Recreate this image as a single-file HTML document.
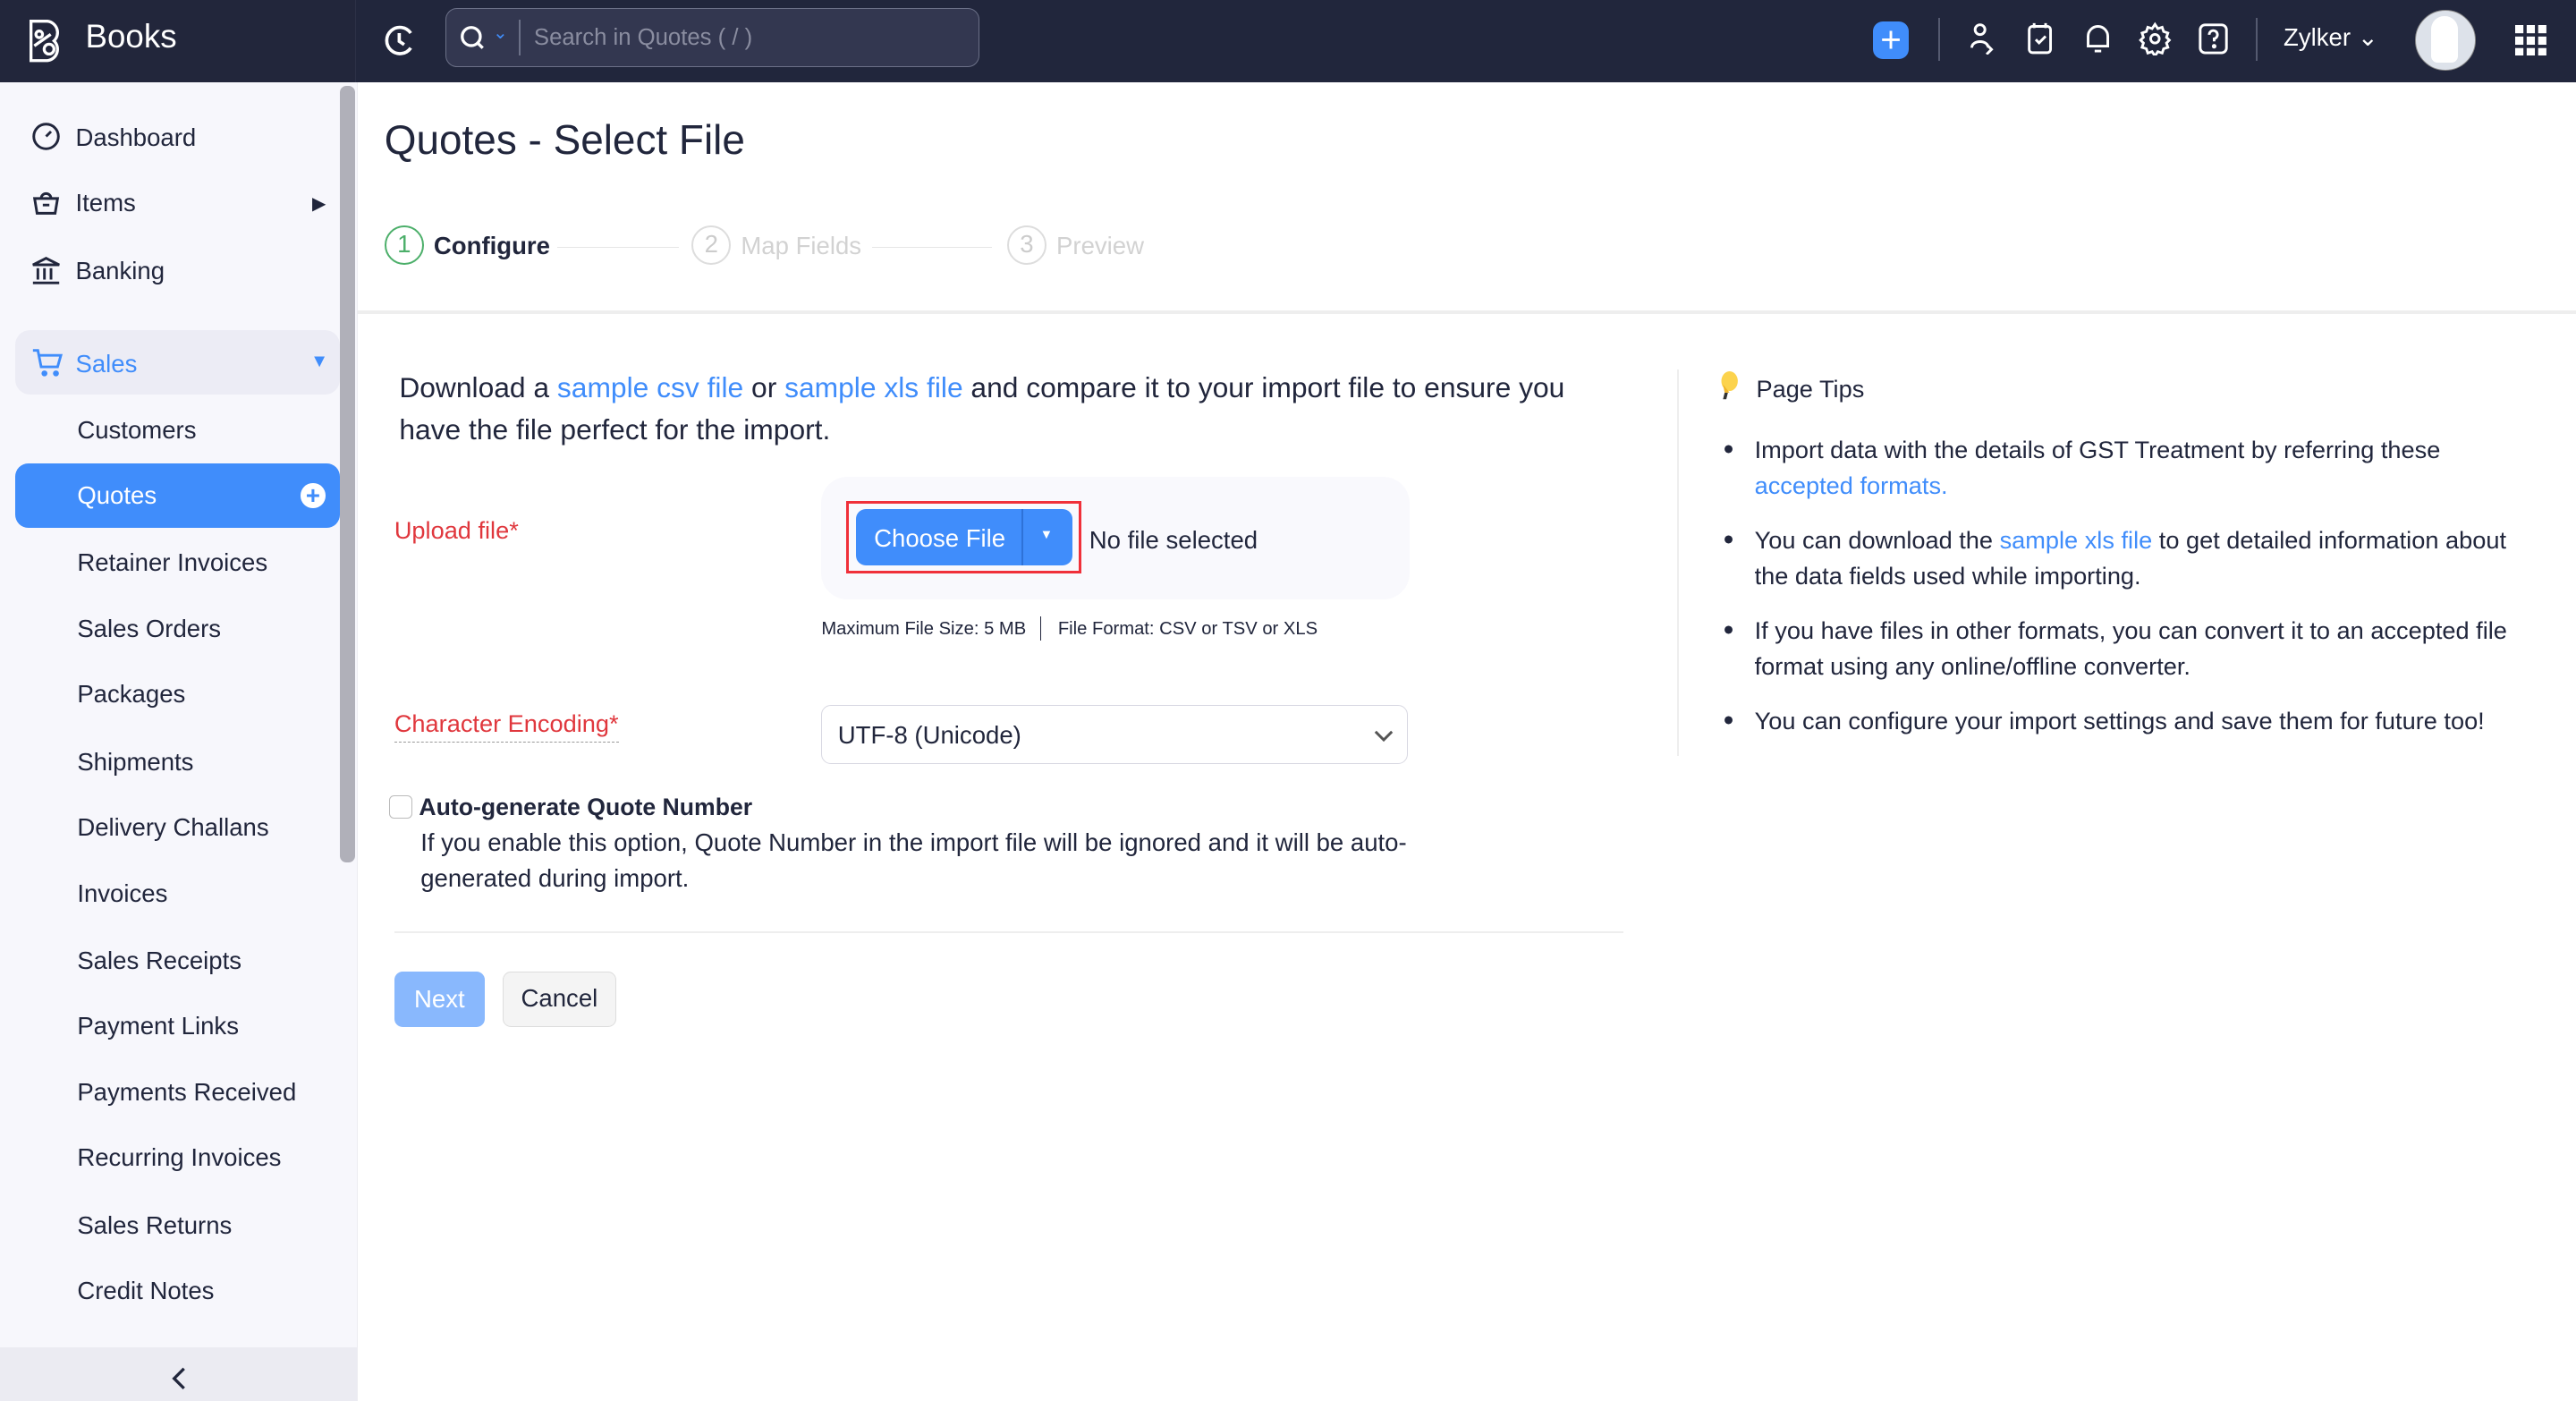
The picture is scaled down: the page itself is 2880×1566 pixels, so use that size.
<!DOCTYPE html>
<html><head><meta charset="utf-8"><style>
html,body{margin:0;padding:0;width:2880px;height:1566px;overflow:hidden;background:#fff}
#w{zoom:1.83673;width:1568px;height:853px;position:relative;font-family:"Liberation Sans",sans-serif;color:#21263c}
.a{position:absolute;white-space:nowrap}
.hdr{position:absolute;left:0;top:0;width:1568px;height:50px;background:#21263c}
.side{position:absolute;left:0;top:50px;width:217px;height:803px;background:#f7f7fc;border-right:1px solid #ececf1}
.ni{position:absolute;left:47px;font-size:15px;color:#21263c}
.blue{color:#408dfb}
svg{position:absolute}
.bl{position:absolute;left:0;font-size:18px}
</style></head><body><div id="w">
<div class="hdr"></div>
<div class="a" style="left:0;top:0;width:216px;height:50px;background:#22263b;border-right:1px solid #2c3147"></div>
<svg style="left:17px;top:11px" width="28" height="28" viewBox="0 0 28 28" fill="none" stroke="#fff" stroke-width="1.8"><path d="M2 2h10a7 7 0 0 1 4 12a7 7 0 0 1 -4 12H2z"/><circle cx="7" cy="10" r="2"/><path d="M4 17l10 -7"/><circle cx="13" cy="19" r="3"/></svg>
<div class="a" style="left:52px;top:11px;font-size:20px;color:#fff">Books</div>
<svg style="left:233px;top:14px" width="21" height="21" viewBox="0 0 21 21" fill="none" stroke="#fff" stroke-width="2"><path d="M17 6A8 8 0 1 0 17 15"/><path d="M10 6v5l3 2"/></svg>
<div class="a" style="left:271px;top:5px;width:324px;height:35px;border:1px solid #6b7087;border-radius:7px;background:#333750"></div>
<svg style="left:280px;top:15px" width="16" height="16" viewBox="0 0 16 16" fill="none" stroke="#fff" stroke-width="1.8"><circle cx="7" cy="7" r="5.5"/><path d="M11 11l3 3"/></svg>
<div class="a" style="left:300px;top:13px;color:#408dfb;font-size:11px">⌄</div>
<div class="a" style="left:316px;top:12px;width:1px;height:22px;background:#6b7087"></div>
<div class="a" style="left:325px;top:15px;font-size:14px;color:#8a8da0">Search in Quotes ( / )</div>
<div class="a" style="left:1140px;top:13px;width:22px;height:23px;background:#408dfb;border-radius:6px;color:#fff;font-size:22px;line-height:22px;text-align:center">+</div>
<div class="a" style="left:1180px;top:11px;width:1px;height:26px;background:#555a70"></div>
<svg style="left:1197px;top:13px" width="20" height="20" viewBox="0 0 20 20" fill="none" stroke="#fff" stroke-width="1.6"><circle cx="8" cy="5" r="3"/><path d="M3 16c0-5 10-5 10 0M12 14l3 3-3 3"/></svg>
<svg style="left:1233px;top:13px" width="18" height="21" viewBox="0 0 18 21" fill="none" stroke="#fff" stroke-width="1.6"><rect x="2" y="3" width="13" height="16" rx="2"/><path d="M5 1v3M12 1v3M6 11l2 2 4-4"/></svg>
<svg style="left:1268px;top:13px" width="18" height="21" viewBox="0 0 18 21" fill="none" stroke="#fff" stroke-width="1.6"><path d="M3 15V9a6 6 0 0 1 12 0v6H3zM7 18h4"/></svg>
<svg style="left:1301px;top:13px" width="21" height="21" viewBox="0 0 24 24" fill="none" stroke="#fff" stroke-width="1.8"><circle cx="12" cy="12" r="3"/><path d="M12 2l2 3 3-1 1 3 3 1-1 3 2 2-2 2 1 3-3 1-1 3-3-1-2 3-2-3-3 1-1-3-3-1 1-3-2-2 2-2-1-3 3-1 1-3 3 1z"/></svg>
<svg style="left:1338px;top:14px" width="18" height="19" viewBox="0 0 18 19" fill="none" stroke="#fff" stroke-width="1.6"><rect x="1" y="1" width="16" height="17" rx="3"/><path d="M6.5 7a2.5 2.5 0 1 1 3 2.4V11"/><circle cx="9.5" cy="14" r=".6" fill="#fff"/></svg>
<div class="a" style="left:1373px;top:11px;width:1px;height:26px;background:#555a70"></div>
<div class="a" style="left:1390px;top:14px;font-size:15px;color:#fff">Zylker ⌄</div>
<div class="a" style="left:1470px;top:6px;width:36px;height:36px;border-radius:50%;background:#dde2ea;border:1px solid #888"></div>
<div class="a" style="left:1480px;top:10px;width:16px;height:28px;background:#fff;border-radius:8px 8px 4px 4px"></div>
<svg style="left:1531px;top:15px" width="19" height="19" viewBox="0 0 19 19" fill="#fff"><rect x="0" y="0" width="5" height="5"/><rect x="7" y="0" width="5" height="5"/><rect x="14" y="0" width="5" height="5"/><rect x="0" y="7" width="5" height="5"/><rect x="7" y="7" width="5" height="5"/><rect x="14" y="7" width="5" height="5"/><rect x="0" y="14" width="5" height="5"/><rect x="7" y="14" width="5" height="5"/><rect x="14" y="14" width="5" height="5"/></svg>

<div class="side"></div>
<div class="a" style="left:207px;top:52px;width:9px;height:473px;background:#b0b0b9;border-radius:4px"></div>
<svg style="left:19px;top:74px" width="18" height="18" viewBox="0 0 18 18" fill="none" stroke="#21263c" stroke-width="1.6"><circle cx="9" cy="9" r="7.5"/><path d="M9 9l3-3"/></svg>
<div class="ni" style="left:46px;top:75px">Dashboard</div>
<svg style="left:19px;top:114px" width="18" height="18" viewBox="0 0 18 18" fill="none" stroke="#21263c" stroke-width="1.6"><path d="M2 7h14l-1.5 9h-11zM6 7a3 3 0 0 1 6 0M7 11h4"/></svg>
<div class="ni" style="left:46px;top:115px">Items</div>
<div class="a" style="left:190px;top:117px;font-size:11px">▶</div>
<svg style="left:19px;top:155px" width="18" height="18" viewBox="0 0 18 18" fill="none" stroke="#21263c" stroke-width="1.6"><path d="M1 6l8-4 8 4zM4 8v7M8 8v7M12 8v7M1 17h16"/></svg>
<div class="ni" style="left:46px;top:156px">Banking</div>
<div class="a" style="left:9px;top:201px;width:198px;height:39px;background:#ececf5;border-radius:9px"></div>
<svg style="left:19px;top:211px" width="20" height="19" viewBox="0 0 20 19" fill="none" stroke="#408dfb" stroke-width="1.6"><path d="M1 2h3l2 10h10l2-7H5"/><circle cx="8" cy="16" r="1" fill="#408dfb"/><circle cx="15" cy="16" r="1" fill="#408dfb"/></svg>
<div class="ni blue" style="left:46px;top:213px">Sales</div>
<div class="a blue" style="left:189px;top:214px;font-size:11px">▼</div>
<div class="ni" style="top:253px">Customers</div>
<div class="a" style="left:9px;top:282px;width:198px;height:39px;background:#408dfb;border-radius:8px"></div>
<div class="ni" style="top:293px;color:#fff">Quotes</div>
<div class="a" style="left:183px;top:294px;width:15px;height:15px;border-radius:50%;background:#fff;color:#408dfb;font-size:15px;line-height:15px;text-align:center;font-weight:bold">+</div>
<div class="ni" style="top:334px">Retainer Invoices</div>
<div class="ni" style="top:374px">Sales Orders</div>
<div class="ni" style="top:414px">Packages</div>
<div class="ni" style="top:455px">Shipments</div>
<div class="ni" style="top:495px">Delivery Challans</div>
<div class="ni" style="top:535px">Invoices</div>
<div class="ni" style="top:576px">Sales Receipts</div>
<div class="ni" style="top:616px">Payment Links</div>
<div class="ni" style="top:656px">Payments Received</div>
<div class="ni" style="top:696px">Recurring Invoices</div>
<div class="ni" style="top:737px">Sales Returns</div>
<div class="ni" style="top:777px">Credit Notes</div>
<div class="a" style="left:0;top:820px;width:217px;height:33px;background:#ebebf2"></div>
<svg style="left:104px;top:832px" width="10" height="14" viewBox="0 0 10 14" fill="none" stroke="#21263c" stroke-width="1.8"><path d="M8 1L2 7l6 6"/></svg>

<div class="a" style="left:234px;top:70px;font-size:25px;color:#21263c">Quotes - Select File</div>
<div class="a" style="left:234px;top:137px;width:24px;height:24px;border:1.5px solid #4caf6a;border-radius:50%;box-sizing:border-box;text-align:center;font-size:15px;line-height:21px;color:#4caf6a">1</div>
<div class="a" style="left:264px;top:141px;font-size:15px;font-weight:bold">Configure</div>
<div class="a" style="left:339px;top:150px;width:74px;height:1px;background:#e6e6e6"></div>
<div class="a" style="left:421px;top:137px;width:24px;height:24px;border:1.5px solid #ddd;border-radius:50%;box-sizing:border-box;text-align:center;font-size:15px;line-height:21px;color:#ccc">2</div>
<div class="a" style="left:451px;top:141px;font-size:15px;color:#d2d2d2">Map Fields</div>
<div class="a" style="left:531px;top:150px;width:73px;height:1px;background:#e6e6e6"></div>
<div class="a" style="left:613px;top:137px;width:24px;height:24px;border:1.5px solid #ddd;border-radius:50%;box-sizing:border-box;text-align:center;font-size:15px;line-height:21px;color:#ccc">3</div>
<div class="a" style="left:643px;top:141px;font-size:15px;color:#d2d2d2">Preview</div>
<div class="a" style="left:218px;top:189px;width:1350px;height:2px;background:#eeeeee"></div>

<div class="a" style="left:243px;top:223px;font-size:17.3px;line-height:26px;color:#21263c">Download a <span class="blue">sample csv file</span> or <span class="blue">sample xls file</span> and compare it to your import file to ensure you<br>have the file perfect for the import.</div>
<div class="a" style="left:240px;top:314px;font-size:14.8px;color:#e0373d">Upload file*</div>
<div class="a" style="left:500px;top:290px;width:358px;height:75px;background:#f9f9fd;border-radius:16px"></div>
<div class="a" style="left:515px;top:305px;width:143px;height:44px;border:2px solid #f0303a;box-sizing:border-box"></div>
<div class="a" style="left:521px;top:310px;width:132px;height:34px;background:#408dfb;border-radius:6px"></div>
<div class="a" style="left:622px;top:310px;width:1px;height:34px;background:#2e72d8"></div>
<div class="a" style="left:532px;top:319px;font-size:15px;color:#fff">Choose File</div>
<div class="a" style="left:633px;top:321px;font-size:8px;color:#fff">▼</div>
<div class="a" style="left:663px;top:320px;font-size:15px">No file selected</div>
<div class="a" style="left:500px;top:377px;font-size:11px">Maximum File Size: 5 MB</div>
<div class="a" style="left:633px;top:375px;width:1px;height:15px;background:#21263c"></div>
<div class="a" style="left:644px;top:377px;font-size:11px">File Format: CSV or TSV or XLS</div>
<div class="a" style="left:240px;top:432px;font-size:14.8px;color:#e0373d;border-bottom:1px dashed #999;padding-bottom:2px">Character Encoding*</div>
<div class="a" style="left:500px;top:429px;width:357px;height:36px;border:1px solid #d8d8e2;border-radius:6px;box-sizing:border-box"></div>
<div class="a" style="left:510px;top:439px;font-size:15px">UTF-8 (Unicode)</div>
<svg style="left:836px;top:444px" width="12" height="8" viewBox="0 0 12 8" fill="none" stroke="#555" stroke-width="1.6"><path d="M1 1l5 5 5-5"/></svg>
<div class="a" style="left:237px;top:484px;width:14px;height:14px;border:1px solid #bbb;border-radius:3px;box-sizing:border-box"></div>
<div class="a" style="left:255px;top:483px;font-size:14.5px;font-weight:bold">Auto-generate Quote Number</div>
<div class="a" style="left:256px;top:502px;font-size:15px;line-height:22px">If you enable this option, Quote Number in the import file will be ignored and it will be auto-<br>generated during import.</div>
<div class="a" style="left:240px;top:567px;width:748px;height:1px;background:#eee"></div>
<div class="a" style="left:240px;top:591px;width:55px;height:34px;background:#89b8fd;border-radius:5px;color:#fff;font-size:15px;line-height:34px;text-align:center">Next</div>
<div class="a" style="left:306px;top:591px;width:69px;height:34px;background:#f4f4f4;border:1px solid #ddd;border-radius:5px;box-sizing:border-box;font-size:15px;line-height:32px;text-align:center">Cancel</div>

<div class="a" style="left:1021px;top:225px;width:1px;height:235px;background:#eee"></div>
<svg style="left:1045px;top:226px" width="14" height="18" viewBox="0 0 14 18"><ellipse cx="8" cy="6" rx="5" ry="6" fill="#fcd34d"/><path d="M5 13l2 0l-1 4l-2 0z" fill="#333"/><path d="M4 8l1 5h3" fill="#f0b429"/></svg>
<div class="a" style="left:1069px;top:228px;font-size:14.8px">Page Tips</div>
<div class="a" style="left:1049px;top:263px;font-size:14.8px;line-height:22px;color:#21263c">
<div style="position:relative"><span class="bl">•</span><div style="margin-left:19px">Import data with the details of GST Treatment by referring these<br><span class="blue">accepted formats.</span></div></div>
<div style="position:relative;margin-top:11px"><span class="bl">•</span><div style="margin-left:19px">You can download the <span class="blue">sample xls file</span> to get detailed information about<br>the data fields used while importing.</div></div>
<div style="position:relative;margin-top:11px"><span class="bl">•</span><div style="margin-left:19px">If you have files in other formats, you can convert it to an accepted file<br>format using any online/offline converter.</div></div>
<div style="position:relative;margin-top:11px"><span class="bl">•</span><div style="margin-left:19px">You can configure your import settings and save them for future too!</div></div>
</div>
</div></body></html>
